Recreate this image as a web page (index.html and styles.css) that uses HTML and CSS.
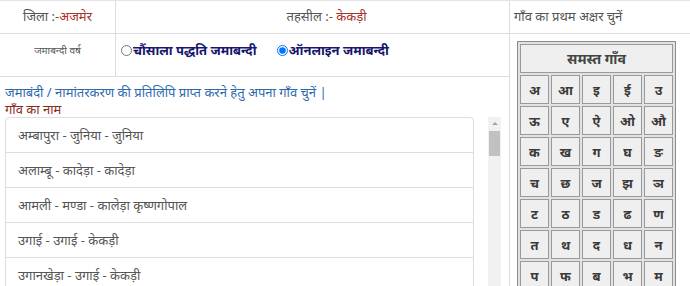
FILE: index.html
```html
<!DOCTYPE html>
<html lang="hi">
<head>
    <meta charset="UTF-8">
    <meta name="viewport" content="width=device-width, initial-scale=1.0">
    <title>अपना खाता - जमाबन्दी</title>
    <link rel="stylesheet" href="styles.css">
</head>
<body>

<div class="page">
    <div class="cell zila">जिला :-<span class="laal">अजमेर</span></div>
    <div class="cell tehsil">तहसील :- <span class="laal">केकड़ी</span></div>
    <div class="cell akshar-title">गाँव का प्रथम अक्षर चुनें</div>

    <div class="cell varsh">जमाबन्दी वर्ष</div>
    <div class="cell radios">
        <label><input type="radio" name="jamabandi">चौंसाला पद्धति जमाबन्दी</label>
        <label><input type="radio" name="jamabandi" checked>ऑनलाइन जमाबन्दी</label>
    </div>

    <div class="cell akshar">
        <table class="akshar-table">
            <tr><td colspan="5" class="samast">समस्त गाँव</td></tr>
            <tr><td>अ</td><td>आ</td><td>इ</td><td>ई</td><td>उ</td></tr>
            <tr><td>ऊ</td><td>ए</td><td>ऐ</td><td>ओ</td><td>औ</td></tr>
            <tr><td>क</td><td>ख</td><td>ग</td><td>घ</td><td>ङ</td></tr>
            <tr><td>च</td><td>छ</td><td>ज</td><td>झ</td><td>ञ</td></tr>
            <tr><td>ट</td><td>ठ</td><td>ड</td><td>ढ</td><td>ण</td></tr>
            <tr><td>त</td><td>थ</td><td>द</td><td>ध</td><td>न</td></tr>
            <tr><td>प</td><td>फ</td><td>ब</td><td>भ</td><td>म</td></tr>
        </table>
    </div>

    <div class="cell gaon">
        <p class="nirdesh">जमाबंदी / नामांतरकरण की प्रतिलिपि प्राप्त करने हेतु अपना गाँव चुनें |</p>
        <p class="gaon-label">गाँव का नाम</p>
        <div class="suchi-wrap">
            <ul class="suchi">
                <li>अम्बापुरा - जुनिया - जुनिया</li>
                <li>अलाम्बू - कादेड़ा - कादेड़ा</li>
                <li>आमली - मण्डा - कालेड़ा कृष्णगोपाल</li>
                <li>उगाई - उगाई - केकड़ी</li>
                <li>उगानखेड़ा - उगाई - केकड़ी</li>
            </ul>
            <div class="scrollbar">
                <div class="arrow"></div>
                <div class="thumb"></div>
            </div>
        </div>
    </div>
</div>

</body>
</html>
```

FILE: styles.css
```css
body {
    margin: 0;
    padding: 0;
    background-color: #fff;
    font-family: "Noto Sans", "Noto Sans Devanagari", sans-serif;
    color: #555;
    overflow: hidden;
}
.page {
    display: grid;
    grid-template-columns: 116px 394px 180px;
    grid-template-rows: 33px 43px auto;
    height: 286px;
    border-top: 1px solid #e4e4e4;
    box-sizing: border-box;
}
.cell {
    box-sizing: border-box;
    border-right: 1px solid #ddd;
    border-bottom: 1px solid #ddd;
    font-size: 13px;
}
.laal {
    color: #a8312a;
}
.zila {
    grid-column: 1;
    grid-row: 1;
    text-align: center;
    line-height: 31px;
}
.tehsil {
    grid-column: 2;
    grid-row: 1;
    text-align: center;
    line-height: 31px;
    padding-left: 28px;
}
.akshar-title {
    grid-column: 3;
    grid-row: 1;
    border-right: none;
    line-height: 31px;
    padding-left: 4px;
}
.varsh {
    grid-column: 1;
    grid-row: 2;
    text-align: center;
    font-size: 10px;
    padding-top: 7px;
    line-height: 18px;
}
.radios {
    grid-column: 2;
    grid-row: 2;
    padding: 5px 0 0 5px;
    display: flex;
    align-items: flex-start;
    gap: 20px;
}
.radios label {
    display: flex;
    align-items: center;
    height: 22px;
    font-weight: bold;
    font-size: 13px;
    color: #16166e;
    white-space: nowrap;
}
.radios input {
    margin: 0 1px 0 0;
    width: 11px;
    height: 11px;
}
.akshar {
    grid-column: 3;
    grid-row: 2 / span 2;
    border-right: none;
    border-bottom: none;
    padding: 7px 0 0 7px;
}
.akshar-table {
    border: 1px solid #8c8c8c;
    border-spacing: 2px;
    background-color: #e2e2e2;
    width: 159px;
    table-layout: fixed;
}
.akshar-table td {
    border: 1px solid #9a9a9a;
    background-color: #efefef;
    height: 27px;
    padding: 0;
    text-align: center;
    font-weight: bold;
    font-size: 13px;
    color: #3a3a3a;
}
.akshar-table .samast {
    font-size: 14px;
    color: #444;
}
.gaon {
    grid-column: 1 / span 2;
    grid-row: 3;
    border-bottom: none;
    padding: 7px 8px 0 5px;
    overflow: hidden;
}
.nirdesh {
    margin: 0;
    line-height: 17px;
    color: #2d6aad;
}
.gaon-label {
    margin: 0 0 -1px;
    line-height: 17px;
    color: #8b2a1c;
}
.suchi-wrap {
    display: flex;
    gap: 14px;
    align-items: flex-start;
}
.suchi {
    flex: 1;
    list-style: none;
    margin: 0;
    padding: 0;
}
.suchi li {
    border: 1px solid #ddd;
    margin-bottom: -1px;
    padding: 0 12px;
    height: 36px;
    line-height: 34px;
    box-sizing: border-box;
    font-size: 13px;
    color: #555;
}
.suchi li:first-child {
    border-top-left-radius: 4px;
    border-top-right-radius: 4px;
}
.scrollbar {
    width: 13px;
    height: 180px;
    background-color: #f1f1f1;
    display: flex;
    flex-direction: column;
    align-items: center;
}
.arrow {
    width: 0;
    height: 0;
    margin-top: 5px;
    border-left: 3px solid transparent;
    border-right: 3px solid transparent;
    border-bottom: 3px solid #a3a3a3;
}
.thumb {
    width: 11px;
    height: 25px;
    margin-top: 6px;
    background-color: #c1c1c1;
}
```
